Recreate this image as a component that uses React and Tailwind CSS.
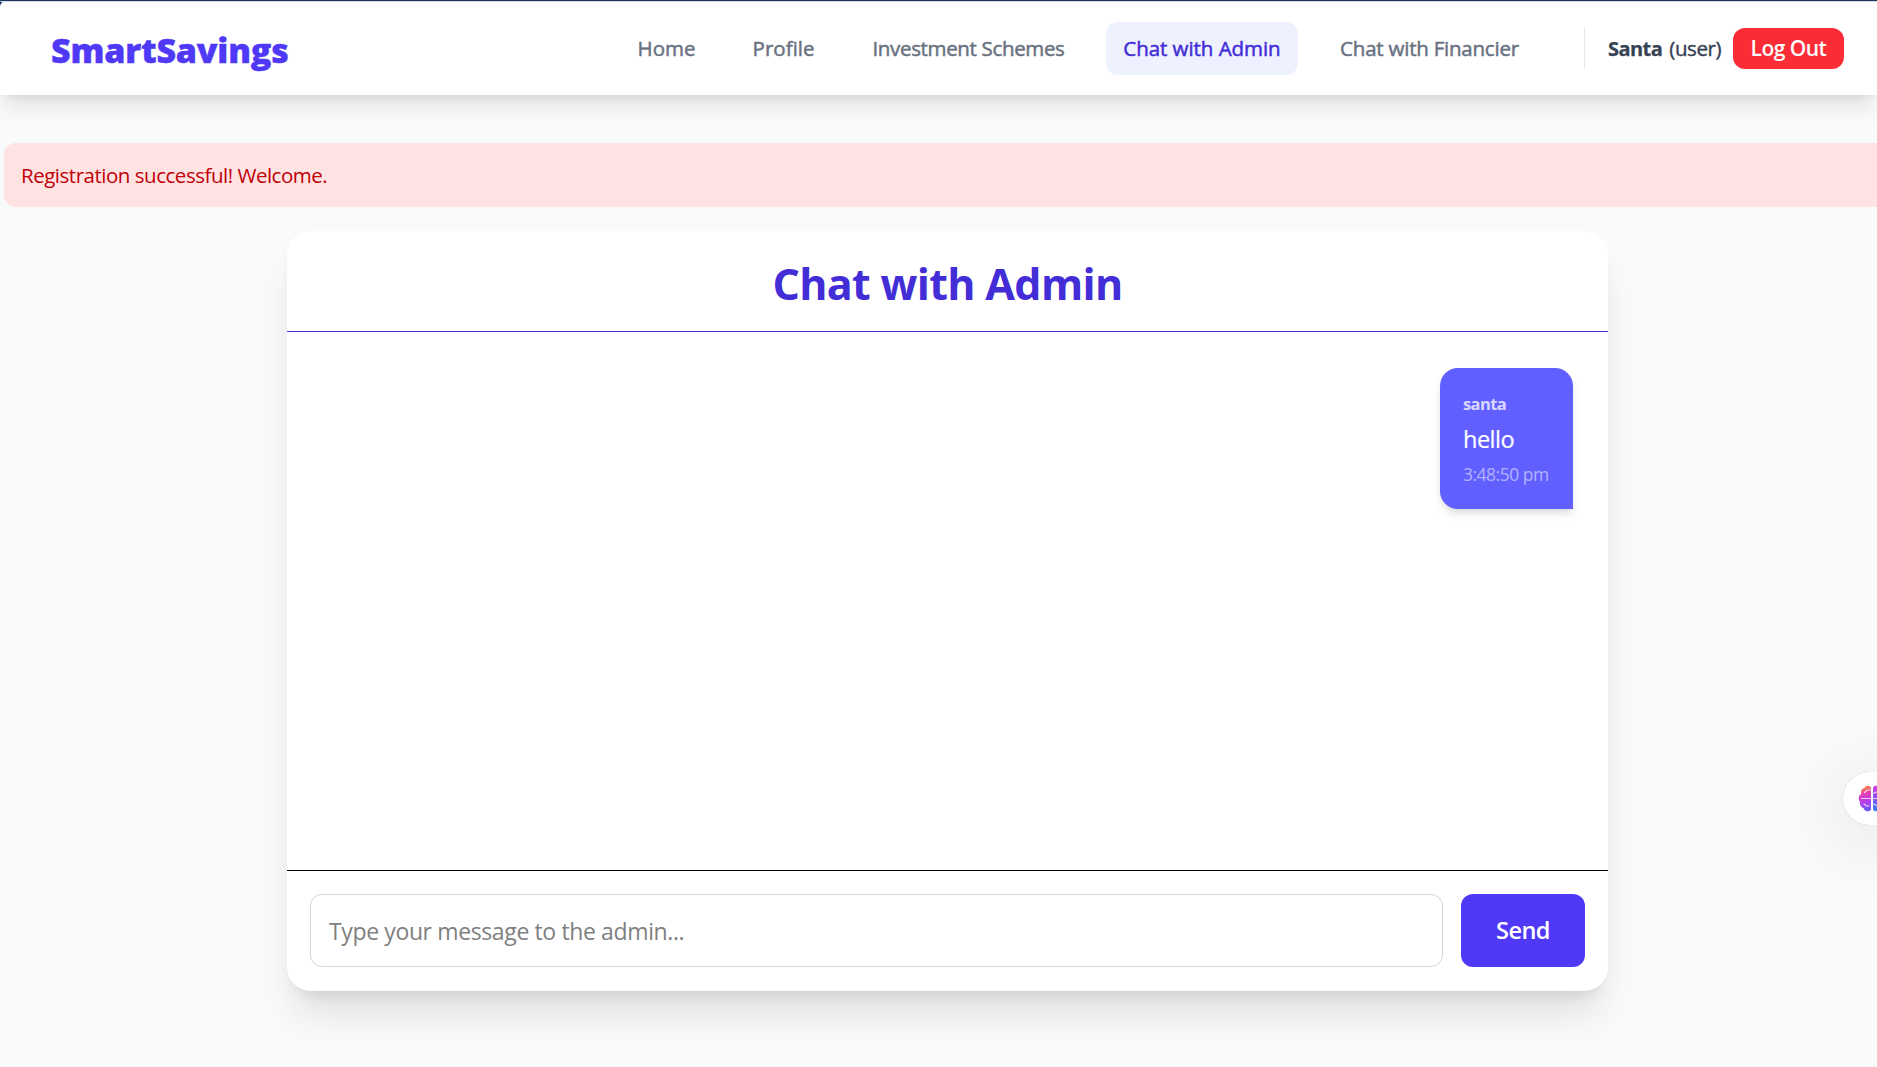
import React from "react";

const links = [
  { label: "Home", cls: "w-[91px] text-[#6a7282]" },
  { label: "Profile", cls: "w-[95px] text-[#6a7282]" },
  { label: "Investment Schemes", cls: "w-[227px] text-[#6a7282] tracking-[-0.34px]" },
  { label: "Chat with Admin", cls: "w-[192px] bg-indigo-50 text-[#432dd7] tracking-[-0.05px]" },
  { label: "Chat with Financier", cls: "w-[215px] text-[#6a7282] tracking-[-0.22px]" },
];

function Navbar() {
  return (
    <nav className="relative flex h-[93px] shrink-0 items-center justify-between rounded-tl-md bg-white pl-[51px] pr-[33px] shadow-[0_15px_22.5px_-4.5px_rgba(0,0,0,0.1),0_6px_9px_-6px_rgba(0,0,0,0.1)]">
      <span className="pt-[2px] text-[34px] leading-[48px] font-extrabold tracking-[-0.2px] text-[#4f39f6] [-webkit-text-stroke:0.4px_currentColor]">SmartSavings</span>
      <div className="flex items-center text-[20.5px]">
        <div className="flex items-center gap-6 [-webkit-text-stroke:0.5px_currentColor]">
          {links.map((l) => (
            <a key={l.label} className={"flex h-[53px] items-center justify-center rounded-xl whitespace-nowrap " + l.cls}>
              {l.label}
            </a>
          ))}
        </div>
        <div className="ml-[47px] flex h-[41px] items-center border-l border-gray-200 pl-[23px] text-[#364153]">
          <span className="w-[125px] whitespace-nowrap">
            <b className="text-[20px] font-bold tracking-[-0.55px] [-webkit-text-stroke:0.25px_currentColor]">Santa</b>
            <span className="ml-[7px] tracking-[-0.4px] [-webkit-text-stroke:0.4px_currentColor]">(user)</span>
          </span>
          <button className="flex h-[41px] w-[111px] items-center justify-center rounded-xl bg-[#fb2c36] text-[21px] font-semibold tracking-[-0.53px] whitespace-nowrap text-white">
            Log Out
          </button>
        </div>
      </div>
    </nav>
  );
}

function Message() {
  return (
    <div className="h-[141px] w-[133px] rounded-[18px] rounded-br-none bg-[#615fff] pt-[23.5px] pl-[23px] text-white shadow-[0_6px_9px_-1.5px_rgba(0,0,0,0.1),0_3px_6px_-3px_rgba(0,0,0,0.1)]">
      <div className="text-[16.5px] leading-6 font-bold tracking-[-0.6px] opacity-75">santa</div>
      <div className="my-[5px] text-[23.5px] leading-9 tracking-[-0.5px] [-webkit-text-stroke:0.2px_currentColor]">hello</div>
      <div className="text-[17.5px] leading-6 tracking-[-0.5px] whitespace-nowrap opacity-50">3:48:50 pm</div>
    </div>
  );
}

function BrainIcon() {
  return (
    <svg className="ml-[15px] h-[27px] w-[28px]" viewBox="0 0 28 27" fill="none">
      <defs>
        <linearGradient id="brain" x1="5" y1="0" x2="12" y2="27" gradientUnits="userSpaceOnUse">
          <stop offset="0" stopColor="#ff9a1f" />
          <stop offset="0.3" stopColor="#e83fb0" />
          <stop offset="0.6" stopColor="#b53be8" />
          <stop offset="1" stopColor="#5a63fb" />
        </linearGradient>
        <linearGradient id="brainRight" x1="18" y1="0" x2="18" y2="27" gradientUnits="userSpaceOnUse">
          <stop offset="0" stopColor="#d63be0" />
          <stop offset="0.5" stopColor="#8b4cf0" />
          <stop offset="1" stopColor="#2f86f6" />
        </linearGradient>
      </defs>
      <path d="M13 2.5C11.5 0 7.5 0 6.5 3C3.5 3.5 2.5 6.5 3.3 9C.5 10.5-.3 14 2 17C1.5 20.5 3.5 22.5 5.5 23C6.5 26.8 11.5 27.5 13 24.5Z" fill="url(#brain)" />
      <path d="M15 2.5C16.5 0 20.5 0 21.5 3C24.5 3.5 25.5 6.5 24.7 9C27.5 10.5 28.3 14 26 17C26.5 20.5 24.5 22.5 22.5 23C21.5 26.8 16.5 27.5 15 24.5Z" fill="url(#brainRight)" />
      <path d="M12.5 5H9.5L6.5 7.5M3.5 13.5H12.5M6 19L8.5 21H11M15.5 8.5L18.5 7M15.5 13.5H24M15.5 19L18.5 20.5" stroke="#fff" strokeOpacity="0.75" strokeWidth="1.2" strokeLinecap="round" />
    </svg>
  );
}

export default function App() {
  return (
    <div className="relative h-[1067px] w-full overflow-hidden bg-[#1c355e] font-['Open_Sans','Noto_Sans',sans-serif]">
      <div className="mt-px flex h-[1066px] flex-col rounded-tl-md bg-[#f9fafb]">
        <div className="h-px shrink-0 rounded-tl-md bg-[#d5dae4]" />
        <Navbar />
        <div className="mt-12 ml-1 flex h-16 shrink-0 items-center rounded-l-xl bg-[#ffe2e2] pl-[17px] text-[20.5px] tracking-[-0.48px] text-[#c10007]">
          Registration successful! Welcome.
        </div>
        <main className="mt-6 ml-[287px] flex h-[760px] w-[1321px] shrink-0 flex-col rounded-3xl bg-white shadow-[0_30px_37.5px_-7.5px_rgba(0,0,0,0.1),0_12px_15px_-9px_rgba(0,0,0,0.1)]">
          <header className="flex h-[101px] items-center justify-center border-b border-[#432dd7] pt-[6px]">
            <h1 className="text-[43px] font-bold tracking-[-0.66px] text-[#432dd7]">Chat with Admin</h1>
          </header>
          <section className="flex flex-1 items-start justify-end px-[35px] pt-9">
            <Message />
          </section>
          <form className="flex h-[121px] gap-[18px] border-t border-black px-[23px] pt-[23px]">
            <input
              className="h-[73px] flex-1 rounded-xl border border-[#d1d5dc] pl-[18px] text-[23px] tracking-[-0.375px] placeholder:text-[#808080]"
              placeholder="Type your message to the admin..."
            />
            <button type="button" className="h-[73px] w-[124px] rounded-xl bg-[#4f39f6] text-[23.5px] font-semibold tracking-[-0.55px] text-white">
              Send
            </button>
          </form>
        </main>
      </div>
      <div className="absolute top-[772px] left-[1843px] flex h-[53px] w-[66px] items-center rounded-full bg-white shadow-[0_0_1px_rgba(0,0,0,0.25),0_12px_72px_rgba(0,0,0,0.12)]">
        <BrainIcon />
      </div>
    </div>
  );
}
